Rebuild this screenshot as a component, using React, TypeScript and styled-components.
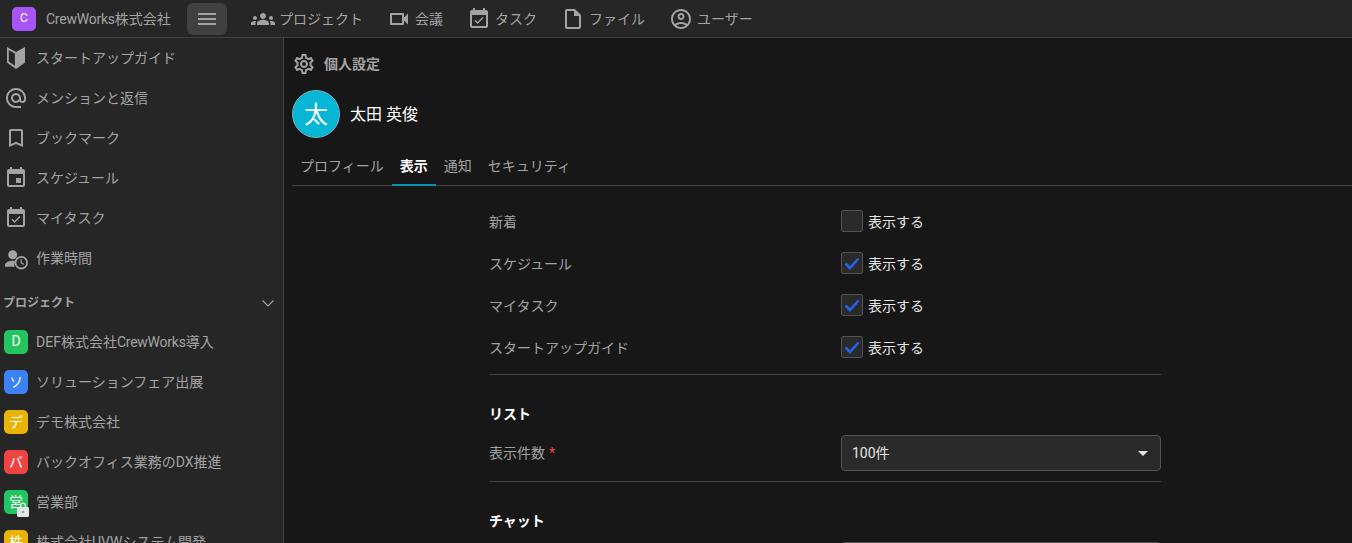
import styled, { createGlobalStyle } from 'styled-components';

const GlobalStyle = createGlobalStyle`
  html, body {
    margin: 0;
    height: 100%;
    overflow: hidden;
    background: #171717;
  }
  * {
    box-sizing: border-box;
  }
  body {
    font-family: Roboto, 'Noto Sans CJK JP', sans-serif;
    font-size: 14px;
  }
`;

const Root = styled.div`
  height: 543px;
  overflow: hidden;
  display: flex;
  flex-direction: column;
`;
const Header = styled.header`
  flex: none;
  height: 38px;
  display: flex;
  align-items: center;
  padding-left: 12px;
  background: #262626;
  border-bottom: 1px solid #404040;
`;
const Logo = styled.div`
  width: 24px;
  height: 24px;
  padding-bottom: 1px;
  border-radius: 5px;
  background: #a855f7;
  color: #fff;
  font-size: 12px;
  display: flex;
  align-items: center;
  justify-content: center;
`;
const Brand = styled.span`
  margin-left: 10px;
  padding-bottom: 2px;
  color: #a3a3a3;
  font-size: 14px;
  width: 125px;
  white-space: nowrap;
`;
const Latin = styled.span`
  letter-spacing: -0.24px;
`;
const MenuButton = styled.button`
  width: 40px;
  height: 32px;
  margin-left: 16px;
  border: 0;
  border-radius: 6px;
  background: #404040;
  color: #a3a3a3;
  padding: 0;
  display: flex;
  align-items: center;
  justify-content: center;
`;
const Nav = styled.nav`
  margin-left: 24px;
  display: flex;
  gap: 24px;
`;
const NavItem = styled.a`
  display: flex;
  align-items: center;
  gap: 4px;
  color: #a3a3a3;
  font-size: 14px;
  white-space: nowrap;
`;
const TextLabel = styled.span`
  padding-bottom: 2px;
`;
const IconSvg = styled.svg`
  flex: none;
  width: 24px;
  height: 24px;
  fill: #a3a3a3;
`;
const Body = styled.div`
  flex: 1;
  min-height: 0;
  display: flex;
`;
const Sidebar = styled.aside`
  flex: none;
  width: 284px;
  background: #262626;
  border-right: 1px solid #404040;
  overflow: hidden;
`;
const SideItem = styled.a`
  height: 40px;
  padding-left: 4px;
  display: flex;
  align-items: center;
  gap: 8px;
  color: #a3a3a3;
  font-size: 14px;
  white-space: nowrap;
`;
const SideSection = styled.div`
  height: 44px;
  padding: 2px 9px 0 3px;
  display: flex;
  align-items: center;
  justify-content: space-between;
  color: #a3a3a3;
  font-size: 12px;
  font-weight: 700;
`;
const Chevron = styled.svg`
  margin-top: 4px;
  fill: none;
  stroke: #a3a3a3;
  stroke-width: 1.2;
`;
const Badge = styled.div<{ $color: string }>`
  position: relative;
  flex: none;
  width: 24px;
  height: 24px;
  padding-bottom: 2px;
  border-radius: 5px;
  background: ${(p) => p.$color};
  color: #fff;
  font-size: 14px;
  display: flex;
  align-items: center;
  justify-content: center;
`;
const LockBadge = styled.svg`
  position: absolute;
  right: -1px;
  bottom: -3px;
  width: 12px;
  height: 15px;
  fill: #e5e5e5;
`;
const Main = styled.main`
  flex: 1;
  min-width: 0;
  padding-left: 8px;
  background: #171717;
`;
const TitleRow = styled.div`
  height: 52px;
  display: flex;
  align-items: center;
  gap: 8px;
  color: #a3a3a3;
  font-size: 14px;
  font-weight: 700;
`;
const Profile = styled.div`
  display: flex;
  align-items: center;
  gap: 10px;
  color: #fff;
  font-size: 16px;
`;
const Avatar = styled.div`
  width: 48px;
  height: 48px;
  padding-bottom: 4px;
  border-radius: 50%;
  border: 1px solid #6fb4c4;
  background: #06b6d4;
  color: #fff;
  font-size: 24px;
  display: flex;
  align-items: center;
  justify-content: center;
`;
const Tabs = styled.div`
  height: 48px;
  display: flex;
  align-items: flex-end;
  border-bottom: 1px solid #404040;
`;
const Tab = styled.a<{ $active?: boolean }>`
  height: 38px;
  padding: 0 8px 2px;
  display: flex;
  align-items: center;
  font-size: 14px;
  font-weight: ${(p) => (p.$active ? 700 : 400)};
  color: ${(p) => (p.$active ? '#fff' : '#a3a3a3')};
  margin-bottom: -1px;
  border-bottom: 2px solid ${(p) => (p.$active ? '#0891b2' : 'transparent')};
`;
const Form = styled.div`
  width: 672px;
  margin-left: 197px;
  padding-top: 14px;
`;
const Row = styled.div`
  height: 42px;
  display: grid;
  grid-template-columns: 352px 1fr;
  align-items: center;
  color: #a3a3a3;
`;
const CheckLabel = styled.label`
  display: flex;
  align-items: center;
  gap: 5px;
  color: #e5e5e5;
`;
const CheckBox = styled.span`
  width: 22px;
  height: 22px;
  border: 1px solid #525252;
  border-radius: 2px;
  background: #2a2a2a;
  display: flex;
  align-items: center;
  justify-content: center;
`;
const Divider = styled.hr`
  margin: 0;
  border: 0;
  border-top: 1px solid #404040;
`;
const CheckDivider = styled(Divider)`
  margin-top: 6px;
`;
const SelectDivider = styled(Divider)`
  margin-top: 10px;
`;
const SectionTitle = styled.h3`
  margin: 0;
  padding-top: 29px;
  height: 60px;
  color: #fff;
  font-size: 14px;
  line-height: 20px;
  font-weight: 700;
`;
const SelectRow = styled.div`
  display: grid;
  grid-template-columns: 352px 1fr;
  align-items: center;
  color: #a3a3a3;
`;
const Required = styled.span`
  margin-left: 4px;
  color: #ef4444;
`;
const Select = styled.div`
  height: 36px;
  padding: 0 12px 2px 10px;
  border: 1px solid #525252;
  border-radius: 4px;
  background: #2a2a2a;
  color: #e5e5e5;
  display: flex;
  align-items: center;
  justify-content: space-between;
`;
const Caret = styled.span`
  width: 0;
  height: 0;
  margin-top: 2px;
  border-left: 5px solid transparent;
  border-right: 5px solid transparent;
  border-top: 5px solid #e5e5e5;
`;

const ICONS = {
  groups:
    'M12 12.75c1.63 0 3.07.39 4.24.9 1.08.48 1.76 1.56 1.76 2.73V18H6v-1.61c0-1.18.68-2.26 1.76-2.73 1.17-.52 2.61-.91 4.24-.91zM4 13c1.1 0 2-.9 2-2s-.9-2-2-2-2 .9-2 2 .9 2 2 2zm1.13 1.1c-.37-.06-.74-.1-1.13-.1-.99 0-1.93.21-2.78.58C.48 14.9 0 15.62 0 16.43V18h4.5v-1.61c0-.83.23-1.61.63-2.29zM20 13c1.1 0 2-.9 2-2s-.9-2-2-2-2 .9-2 2 .9 2 2 2zm4 3.43c0-.81-.48-1.53-1.22-1.85-.85-.37-1.79-.58-2.78-.58-.39 0-.76.04-1.13.1.4.68.63 1.46.63 2.29V18H24v-1.57zM12 6c1.66 0 3 1.34 3 3s-1.34 3-3 3-3-1.34-3-3 1.34-3 3-3z',
  video:
    'M15 8v8H5V8h10m1-2H4c-.55 0-1 .45-1 1v10c0 .55.45 1 1 1h12c.55 0 1-.45 1-1v-3.5l4 4v-11l-4 4V7c0-.55-.45-1-1-1z',
  task:
    'M16.53 11.06L15.47 10l-4.88 4.88-2.12-2.12-1.06 1.06L10.59 17l5.94-5.94zM19 3h-1V1h-2v2H8V1H6v2H5c-1.11 0-1.99.9-1.99 2L3 19c0 1.1.89 2 2 2h14c1.1 0 2-.9 2-2V5c0-1.1-.9-2-2-2zm0 16H5V8h14v11z',
  file:
    'M14 2H6c-1.1 0-1.99.9-1.99 2L4 20c0 1.1.89 2 1.99 2H18c1.1 0 2-.9 2-2V8l-6-6zM6 20V4h7v5h5v11H6z',
  user:
    'M12 2C6.48 2 2 6.48 2 12s4.48 10 10 10 10-4.48 10-10S17.52 2 12 2zM7.35 18.5C8.66 17.56 10.26 17 12 17s3.34.56 4.65 1.5c-1.31.94-2.91 1.5-4.65 1.5s-3.34-.56-4.65-1.5zm10.79-1.38C16.45 15.8 14.32 15 12 15s-4.45.8-6.14 2.12C4.7 15.73 4 13.95 4 12c0-4.42 3.58-8 8-8s8 3.58 8 8c0 1.95-.7 3.73-1.86 5.12zM12 6c-1.93 0-3.5 1.57-3.5 3.5S10.07 13 12 13s3.5-1.57 3.5-3.5S13.93 6 12 6zm0 5c-.83 0-1.5-.67-1.5-1.5S11.17 8 12 8s1.5.67 1.5 1.5S12.83 11 12 11z',
  guide:
    'M3 1l9 5 9-5v15c0 .4-.2.7-.5.9L12 23l-8.500-6c-.3-.2-.5-.5-.5-.9V1zM4.800 4.200v11.400l6.100 4.200V7.400L4.800 4.200z',
  mention:
    'M12 2C6.48 2 2 6.48 2 12s4.48 10 10 10h5v-2h-5c-4.34 0-8-3.66-8-8s3.66-8 8-8 8 3.66 8 8v1.43c0 .79-.71 1.57-1.5 1.57s-1.5-.78-1.5-1.57V12c0-2.76-2.24-5-5-5s-5 2.24-5 5 2.24 5 5 5c1.38 0 2.64-.56 3.54-1.47.65.89 1.77 1.47 2.96 1.47 1.97 0 3.5-1.6 3.5-3.57V12c0-5.52-4.48-10-10-10zm0 13c-1.66 0-3-1.34-3-3s1.34-3 3-3 3 1.34 3 3-1.34 3-3 3z',
  bookmark:
    'M17 3H7c-1.1 0-2 .9-2 2v16l7-3 7 3V5c0-1.1-.9-2-2-2zm0 15-5-2.18L7 18V5h10v13z',
  event:
    'M17 12h-5v5h5v-5zM16 1v2H8V1H6v2H5c-1.11 0-1.99.9-1.99 2L3 19c0 1.1.89 2 2 2h14c1.1 0 2-.9 2-2V5c0-1.1-.9-2-2-2h-1V1h-2zm3 18H5V8h14v11z',
  workTime:
    'M8.700 4.200a4.500 4.500 0 1 1 0 9 4.500 4.500 0 0 1 0-9zM1 20.700V19c0-2.700 4.500-4.200 7.700-4.200.9 0 1.800.1 2.600.3-.6 1-.9 2.200-.9 3.400 0 .8.100 1.500.4 2.200H1zM17.300 10a6.700 6.700 0 1 1 0 13.400 6.700 6.700 0 0 1 0-13.400zm0 1.800a4.900 4.900 0 1 0 0 9.800 4.900 4.900 0 0 0 0-9.800zm-.8 1.400h1.300v3.200l2.300 1.400-.7 1.100-2.900-1.800v-3.900z',
  settings:
    'M19.43 12.98c.04-.32.07-.64.07-.98 0-.34-.03-.66-.07-.98l2.11-1.65c.19-.15.24-.42.12-.64l-2-3.46c-.09-.16-.26-.25-.44-.25-.06 0-.12.01-.17.03l-2.49 1c-.52-.4-1.08-.73-1.69-.98l-.38-2.65C14.46 2.18 14.25 2 14 2h-4c-.25 0-.46.18-.49.42l-.38 2.65c-.61.25-1.17.59-1.69.98l-2.49-1c-.06-.02-.12-.03-.18-.03-.17 0-.34.09-.43.25l-2 3.46c-.13.22-.07.49.12.64l2.11 1.65c-.04.32-.07.65-.07.98 0 .33.03.66.07.98l-2.11 1.65c-.19.15-.24.42-.12.64l2 3.46c.09.16.26.25.44.25.06 0 .12-.01.17-.03l2.49-1c.52.4 1.08.73 1.69.98l.38 2.65c.03.24.24.42.49.42h4c.25 0 .46-.18.49-.42l.38-2.65c.61-.25 1.17-.59 1.69-.98l2.49 1c.06.02.12.03.18.03.17 0 .34-.09.43-.25l2-3.46c.12-.22.07-.49-.12-.64l-2.11-1.65zm-1.98-1.71c.04.31.05.52.05.73 0 .21-.02.43-.05.73l-.14 1.13.89.7 1.08.84-.7 1.21-1.27-.51-1.04-.42-.9.68c-.43.32-.84.56-1.25.73l-1.06.43-.16 1.13-.2 1.35h-1.4l-.19-1.35-.16-1.13-1.06-.43c-.43-.18-.83-.41-1.23-.71l-.91-.7-1.06.43-1.27.51-.7-1.21 1.08-.84.89-.7-.14-1.13c-.03-.31-.05-.54-.05-.74s.02-.43.05-.73l.14-1.13-.89-.7-1.08-.84.7-1.21 1.27.51 1.04.42.9-.68c.43-.32.84-.56 1.25-.73l1.06-.43.16-1.13.2-1.35h1.39l.19 1.35.16 1.13 1.06.43c.43.18.83.41 1.23.71l.91.7 1.06-.43 1.27-.51.7 1.21-1.07.85-.89.7.14 1.13zM12 8c-2.21 0-4 1.79-4 4s1.79 4 4 4 4-1.79 4-4-1.79-4-4-4zm0 6c-1.1 0-2-.9-2-2s.9-2 2-2 2 .9 2 2-.9 2-2 2z',
};

type IconName = keyof typeof ICONS;

const Icon = ({ name }: { name: IconName }) => (
  <IconSvg viewBox='0 0 24 24'>
    <path fillRule='evenodd' d={ICONS[name]} />
  </IconSvg>
);

const NAV: { icon: IconName; label: string }[] = [
  { icon: 'groups', label: 'プロジェクト' },
  { icon: 'video', label: '会議' },
  { icon: 'task', label: 'タスク' },
  { icon: 'file', label: 'ファイル' },
  { icon: 'user', label: 'ユーザー' },
];
const SIDE: { icon: IconName; label: string }[] = [
  { icon: 'guide', label: 'スタートアップガイド' },
  { icon: 'mention', label: 'メンションと返信' },
  { icon: 'bookmark', label: 'ブックマーク' },
  { icon: 'event', label: 'スケジュール' },
  { icon: 'task', label: 'マイタスク' },
  { icon: 'workTime', label: '作業時間' },
];
const PROJECTS = [
  {
    mark: 'D',
    color: '#22c55e',
    label: (
      <>
        DEF株式会社<Latin>CrewWorks</Latin>導入
      </>
    ),
  },
  { mark: 'ソ', color: '#3b82f6', label: 'ソリューションフェア出展' },
  { mark: 'デ', color: '#eab308', label: 'デモ株式会社' },
  { mark: 'バ', color: '#ef4444', label: 'バックオフィス業務のDX推進' },
  { mark: '営', color: '#22c55e', label: '営業部', locked: true },
  { mark: '株', color: '#eab308', label: '株式会社UVWシステム開発' },
];
const CHECKS = [
  { label: '新着', checked: false },
  { label: 'スケジュール', checked: true },
  { label: 'マイタスク', checked: true },
  { label: 'スタートアップガイド', checked: true },
];

const App = () => {
  return (
    <Root>
      <GlobalStyle />
      <Header>
        <Logo>C</Logo>
        <Brand>
          <Latin>CrewWorks</Latin>株式会社
        </Brand>
        <MenuButton>
          <svg width='18' height='12' viewBox='0 0 18 12' fill='currentColor'>
            <rect width='18' height='2' />
            <rect y='5' width='18' height='2' />
            <rect y='10' width='18' height='2' />
          </svg>
        </MenuButton>
        <Nav>
          {NAV.map((n) => (
            <NavItem key={n.label}>
              <Icon name={n.icon} />
              <TextLabel>{n.label}</TextLabel>
            </NavItem>
          ))}
        </Nav>
      </Header>
      <Body>
        <Sidebar>
          {SIDE.map((s) => (
            <SideItem key={s.label}>
              <Icon name={s.icon} />
              <TextLabel>{s.label}</TextLabel>
            </SideItem>
          ))}
          <SideSection>
            プロジェクト
            <Chevron width='12' height='7' viewBox='0 0 12 7'>
              <path d='M.5.5l5.500 5.500 5.500-5.500' />
            </Chevron>
          </SideSection>
          {PROJECTS.map((p) => (
            <SideItem key={p.mark}>
              <Badge $color={p.color}>
                {p.mark}
                {p.locked && (
                  <LockBadge viewBox='0 0 12 15'>
                    <path
                      fillRule='evenodd'
                      d='M3 5V3.500a3 3 0 0 1 6 0V5h1.500c.8 0 1.500.7 1.500 1.500v7c0 .8-.7 1.500-1.500 1.500h-9C.7 15 0 14.300 0 13.500v-7C0 5.700.7 5 1.500 5H3zm1.300 0h3.400V3.500a1.700 1.700 0 0 0-3.400 0V5zM6 9a1 1 0 1 0 0 2 1 1 0 0 0 0-2z'
                    />
                  </LockBadge>
                )}
              </Badge>
              <TextLabel>{p.label}</TextLabel>
            </SideItem>
          ))}
        </Sidebar>
        <Main>
          <TitleRow>
            <Icon name='settings' />
            <TextLabel>個人設定</TextLabel>
          </TitleRow>
          <Profile>
            <Avatar>太</Avatar>
            <TextLabel>太田 英俊</TextLabel>
          </Profile>
          <Tabs>
            <Tab>プロフィール</Tab>
            <Tab $active>表示</Tab>
            <Tab>通知</Tab>
            <Tab>セキュリティ</Tab>
          </Tabs>
          <Form>
            {CHECKS.map((c) => (
              <Row key={c.label}>
                <span>{c.label}</span>
                <CheckLabel>
                  <CheckBox>
                    {c.checked && (
                      <svg width='16' height='13' viewBox='0 0 16 13' fill='none' stroke='#2563eb' strokeWidth='2.6'>
                        <path d='M1.500 6.500l4.500 4.500 8.500-9.500' />
                      </svg>
                    )}
                  </CheckBox>
                  表示する
                </CheckLabel>
              </Row>
            ))}
            <CheckDivider />
            <SectionTitle>リスト</SectionTitle>
            <SelectRow>
              <TextLabel>
                表示件数<Required>*</Required>
              </TextLabel>
              <Select>
                100件
                <Caret />
              </Select>
            </SelectRow>
            <SelectDivider />
            <SectionTitle>チャット</SectionTitle>
            <SelectRow>
              <span />
              <Select />
            </SelectRow>
          </Form>
        </Main>
      </Body>
    </Root>
  );
};

export default App;
